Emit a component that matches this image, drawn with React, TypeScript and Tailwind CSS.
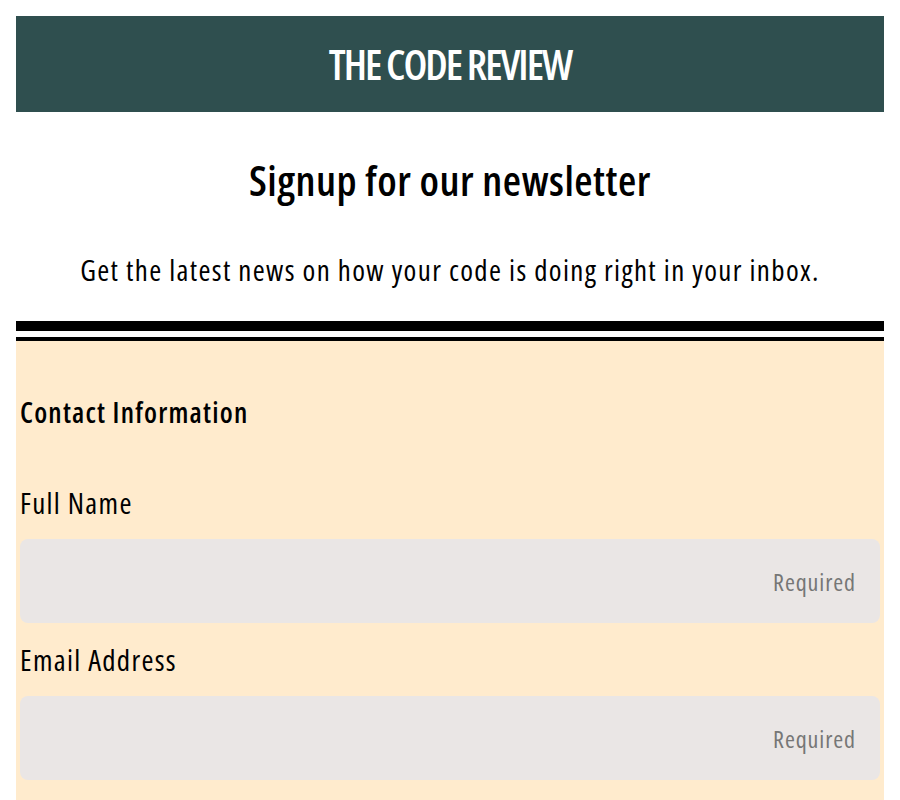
const fields = [
  { label: "Full Name", type: "text" },
  { label: "Email Address", type: "email" },
];

export default function App() {
  return (
    <div className="min-h-screen bg-white p-4 font-['Open_Sans','DejaVu_Sans_Condensed',sans-serif] font-stretch-[75%] text-black">
      <header className="h-24 flex items-center justify-center bg-[#2f4f4f]">
        <h1 className="text-[42px] font-semibold text-white tracking-[-2px] leading-none">
          THE CODE REVIEW
        </h1>
      </header>

      <h2 className="mt-[44px] text-center text-[42px] leading-[48px] font-semibold tracking-[0.5px]">
        Signup for our newsletter
      </h2>
      <p className="mt-12 text-center text-[29px] leading-[35px] tracking-[1.35px]">
        Get the latest news on how your code is doing right in your inbox.
      </p>

      <div className="mt-[34px] h-[10px] bg-black" />
      <div className="mt-[6px] h-1 bg-black" />

      <form className="bg-[#ffebcd] px-1 pt-[54px] pb-6">
        <h3 className="text-[28px] leading-[35px] font-semibold tracking-[1.2px]">
          Contact Information
        </h3>
        <div className="mt-[55px] flex flex-col">
          {fields.map((f, i) => (
            <label key={f.label} className={i > 0 ? "mt-[19px] flex flex-col" : "flex flex-col"}>
              <span className="text-[29px] leading-[35px] tracking-[1.3px]">{f.label}</span>
              <input
                type={f.type}
                placeholder="Required"
                className="mt-[19px] h-[84px] w-full rounded-lg bg-[#eae6e5] px-6 text-right text-2xl tracking-[0.9px] outline-none placeholder:text-[#767676]"
              />
            </label>
          ))}
        </div>
      </form>
    </div>
  );
}
